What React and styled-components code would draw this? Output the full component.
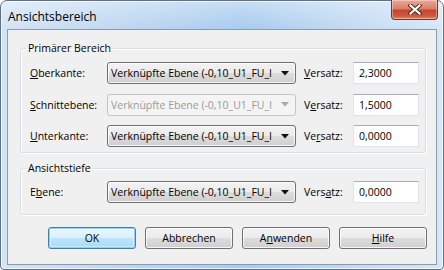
import React from 'react';
import styled, { createGlobalStyle } from 'styled-components';

const GlobalStyle = createGlobalStyle`
  html, body {
    margin: 0;
    padding: 0;
    background: #ffffff;
  }
  body {
    font-family: "Open Sans", "Noto Sans", sans-serif;
    font-size: 10.5px;
    color: #000;
  }
`;

const LEVEL = 'Verknüpfte Ebene (-0,10_U1_FU_I (Decke))';

const Arrow = ({ disabled }) => (
  <svg width="8" height="5" viewBox="0 0 8 5">
    <polygon points="0,0 8,0 4,4.5" fill={disabled ? '#a8a8a8' : '#111'} />
  </svg>
);

const CloseGlyph = () => (
  <svg width="14" height="11" viewBox="0 0 14 11">
    <path d="M2.5 1.5 L11.5 9.5 M11.5 1.5 L2.5 9.5" stroke="#4a2a24" strokeWidth="4" strokeLinecap="square" />
    <path d="M2.5 1.5 L11.5 9.5 M11.5 1.5 L2.5 9.5" stroke="#ffffff" strokeWidth="2.2" strokeLinecap="square" />
  </svg>
);

const Row = ({ label, offset, disabled }) => (
  <>
    <Label>{label}</Label>
    <Combo disabled={disabled}>
      <ComboText>{LEVEL}</ComboText>
      <Arrow disabled={disabled} />
    </Combo>
    <OffsetLabel>{offset.label}</OffsetLabel>
    <Edit>{offset.value}</Edit>
  </>
);

const App = () => {
  return (
    <>
      <GlobalStyle />
      <Window>
        <TitleBar>
          <Title>Ansichtsbereich</Title>
          <CloseButton>
            <CloseGlyph />
          </CloseButton>
        </TitleBar>
        <Client>
          <Group>
            <Legend>Primärer Bereich</Legend>
            <Grid>
              <Row
                label={<><u>O</u>berkante:</>}
                offset={{ label: <><u>V</u>ersatz:</>, value: '2,3000' }}
              />
              <Row
                disabled
                label={<><u>S</u>chnittebene:</>}
                offset={{ label: <>V<u>e</u>rsatz:</>, value: '1,5000' }}
              />
              <Row
                label={<><u>U</u>nterkante:</>}
                offset={{ label: <>Ve<u>r</u>satz:</>, value: '0,0000' }}
              />
            </Grid>
          </Group>
          <Group last>
            <Legend>Ansichtstiefe</Legend>
            <Grid>
              <Row
                label={<>E<u>b</u>ene:</>}
                offset={{ label: <>Vers<u>a</u>tz:</>, value: '0,0000' }}
              />
            </Grid>
          </Group>
          <Buttons>
            <Button primary>OK</Button>
            <Button>Abbrechen</Button>
            <Button>A<u>n</u>wenden</Button>
            <Button><u>H</u>ilfe</Button>
          </Buttons>
        </Client>
      </Window>
    </>
  );
};

const Window = styled.div`
  box-sizing: border-box;
  width: 444px;
  height: 270px;
  border: 1px solid #5f7189;
  border-radius: 7px 7px 4px 4px;
  padding: 0 6px 4px 6px;
  display: flex;
  flex-direction: column;
  background:
    linear-gradient(180deg, rgba(255,255,255,0.35) 0px, rgba(255,255,255,0) 28px),
    linear-gradient(90deg, #d3e4f5 0%, #bcd6f1 30%, #a9cbef 55%, #c3dbf3 80%, #d6e7f7 100%);
  box-shadow: inset 0 0 0 1px rgba(255,255,255,0.7);
`;

const TitleBar = styled.div`
  height: 28px;
  display: flex;
  justify-content: space-between;
  align-items: flex-start;
  padding-left: 1px;
`;

const Title = styled.div`
  font-size: 12px;
  line-height: 16px;
  margin-top: 8px;
  color: #000;
`;

const CloseButton = styled.div`
  box-sizing: border-box;
  width: 47px;
  height: 20px;
  margin-top: -1px;
  margin-right: -1px;
  border: 1px solid #6e3830;
  border-top: none;
  border-radius: 0 0 4px 4px;
  display: flex;
  align-items: center;
  justify-content: center;
  background: linear-gradient(180deg, #e9a99b 0%, #dc7e6a 45%, #c4452c 55%, #cf5a3f 85%, #e08c6f 100%);
  box-shadow: inset 0 0 0 1px rgba(255,255,255,0.35);
`;

const Client = styled.div`
  flex: 1;
  border: 1px solid #8a9bb0;
  background: #f0f0f0;
  padding: 11px 10px 0 12px;
  display: flex;
  flex-direction: column;
`;

const Group = styled.fieldset`
  margin: 0 0 ${p => (p.last ? '12px' : '8px')} 0;
  padding: ${p => (p.last ? '6px 6px 11px 9px' : '7px 6px 5px 9px')};
  min-width: 0;
  border: 1px solid #d5dfe5;
  border-radius: 3px;
  box-shadow: inset 1px 1px 0 #fff, 1px 1px 0 #fff;
`;

const Legend = styled.legend`
  padding: 0 2px;
  margin-left: -4px;
  font-size: 10.5px;
  line-height: 14px;
  color: #000;
`;

const Grid = styled.div`
  display: grid;
  grid-template-columns: 77px 189px 57px 66px;
  grid-auto-rows: 22px;
  row-gap: 9.5px;
  align-items: center;
`;

const Label = styled.div`
  white-space: nowrap;
`;

const OffsetLabel = styled(Label)`
  padding-left: 8px;
`;

const Combo = styled.div`
  box-sizing: border-box;
  height: 22px;
  display: flex;
  align-items: center;
  gap: 8px;
  padding: 0 6px 0 3px;
  border: 1px solid ${p => (p.disabled ? '#c4c4c4' : '#707070')};
  border-radius: 3px;
  color: ${p => (p.disabled ? '#9a9a9a' : '#000')};
  background: ${p =>
    p.disabled
      ? '#f4f4f4'
      : 'linear-gradient(180deg, #f2f2f2 0%, #ebebeb 50%, #dddddd 50%, #cfcfcf 100%)'};
  box-shadow: ${p => (p.disabled ? 'none' : 'inset 0 0 0 1px rgba(255,255,255,0.8)')};
`;

const ComboText = styled.span`
  flex: 1;
  overflow: hidden;
  white-space: nowrap;
`;

const Edit = styled.div`
  box-sizing: border-box;
  height: 22px;
  padding: 0 5px;
  display: flex;
  align-items: center;
  background: #fff;
  border: 1px solid #e2e3ea;
  border-top-color: #abadb3;
`;

const Buttons = styled.div`
  display: grid;
  grid-template-columns: repeat(4, 88px);
  column-gap: 9px;
  padding-left: 28px;
`;

const Button = styled.div`
  box-sizing: border-box;
  height: 22px;
  display: flex;
  align-items: center;
  justify-content: center;
  border: 1px solid ${p => (p.primary ? '#3c7fb1' : '#707070')};
  border-radius: 3px;
  background: ${p =>
    p.primary
      ? 'linear-gradient(180deg, #eaf6fd 0%, #d9f0fc 50%, #bee6fd 50%, #a7d9f5 100%)'
      : 'linear-gradient(180deg, #f2f2f2 0%, #ebebeb 50%, #dddddd 50%, #cfcfcf 100%)'};
  box-shadow: ${p =>
    p.primary
      ? 'inset 0 0 0 1px #8fd1f4, inset 0 0 0 2px rgba(255,255,255,0.4)'
      : 'inset 0 0 0 1px rgba(255,255,255,0.8)'};
`;

export default App;
